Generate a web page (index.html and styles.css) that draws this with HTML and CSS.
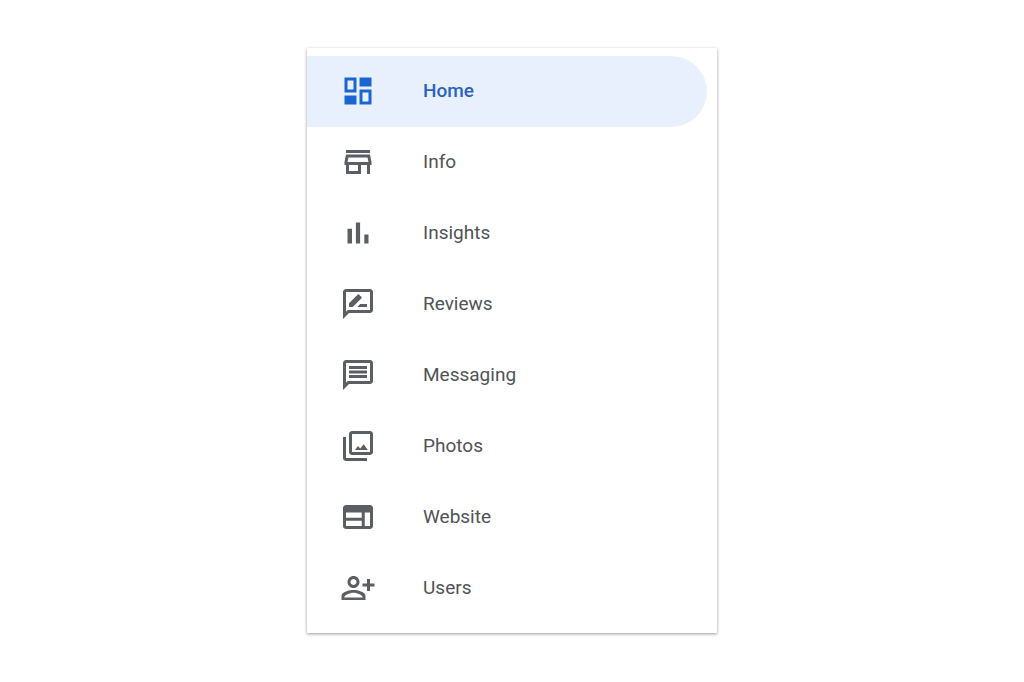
FILE: index.html
```html
<!DOCTYPE html>
<html lang="en">
<head>
  <meta charset="UTF-8">
  <title>Home</title>
  <link rel="stylesheet" href="styles.css">
</head>
<body>
  <nav class="menu">
    <a href="#" class="item active">
      <svg class="icon" viewBox="0 0 24 24"><path d="M9 5v6H5V5h4m10 8v6h-4v-6h4M21 3h-8v6h8V3zM11 3H3v10h8V3zm10 8h-8v10h8V11zm-10 4H3v6h8v-6z"/></svg>
      Home
    </a>
    <a href="#" class="item">
      <svg class="icon" viewBox="0 0 24 24"><path d="M18.36 9l.6 3H5.04l.6-3h12.72M20 4H4v2h16V4zm0 3H4l-1 5v2h1v6h10v-6h4v6h2v-6h1v-2l-1-5zM6 18v-4h6v4H6z"/></svg>
      Info
    </a>
    <a href="#" class="item">
      <svg class="icon" viewBox="0 0 24 24"><path d="M5 9.2h3V19H5zM10.6 5h2.8v14h-2.8zM16.2 13H19v6h-2.8z"/></svg>
      Insights
    </a>
    <a href="#" class="item">
      <svg class="icon" viewBox="0 0 24 24"><path d="M20 2H4c-1.1 0-2 .9-2 2v18l4-4h14c1.1 0 2-.9 2-2V4c0-1.1-.9-2-2-2zm0 14H5.17L4 17.17V4h16v12z"/><path d="M6 14h2.47l5.88-5.88c.2-.2.2-.51 0-.71l-1.77-1.77c-.2-.2-.51-.2-.71 0L6 11.53V14zm12 0v-2h-4.5l-2 2H18z"/></svg>
      Reviews
    </a>
    <a href="#" class="item">
      <svg class="icon" viewBox="0 0 24 24"><path d="M4 4h16v12H5.17L4 17.17V4m0-2c-1.1 0-1.99.9-1.99 2L2 22l4-4h14c1.1 0 2-.9 2-2V4c0-1.1-.9-2-2-2H4zm2 10h12v2H6v-2zm0-3h12v2H6V9zm0-3h12v2H6V6z"/></svg>
      Messaging
    </a>
    <a href="#" class="item">
      <svg class="icon" viewBox="0 0 24 24"><path d="M20 4v12H8V4h12m0-2H8c-1.1 0-2 .9-2 2v12c0 1.1.9 2 2 2h12c1.1 0 2-.9 2-2V4c0-1.1-.9-2-2-2zM2 6v14c0 1.1.9 2 2 2h14v-2H4V6H2z"/><path d="M10 14.6l2-2.6 1.5 1.7 2.3-2.9 2.7 3.8z"/></svg>
      Photos
    </a>
    <a href="#" class="item">
      <svg class="icon" viewBox="0 0 24 24"><path d="M20 4H4c-1.1 0-2 .9-2 2v12c0 1.1.9 2 2 2h16c1.1 0 2-.9 2-2V6c0-1.1-.9-2-2-2zM4 9h10.5v3.5H4V9zm0 5.5h10.5V18H4v-3.5zM20 18h-3.5V9H20v9z"/></svg>
      Website
    </a>
    <a href="#" class="item">
      <svg class="icon" viewBox="0 0 24 24"><path d="M13 8c0-2.21-1.79-4-4-4S5 5.79 5 8s1.79 4 4 4 4-1.79 4-4zm-2 0c0 1.1-.9 2-2 2s-2-.9-2-2 .9-2 2-2 2 .9 2 2zM1 17.3V20h16v-2.7c0-2.6-5.33-3.9-8-3.9s-8 1.3-8 3.9zm1.8 1c.2-1.4 3.5-3.1 6.2-3.1 2.69 0 6 1.7 6.2 3.1H2.8zM20 14v-3h3V9h-3V6h-2v3h-3v2h3v3h2z"/></svg>
      Users
    </a>
  </nav>
</body>
</html>
```
FILE: styles.css
```css
body {
  margin: 0;
  padding: 48px 20px;
  background-color: #fff;
  font-family: Roboto, Arial, sans-serif;
}

.menu {
  box-sizing: border-box;
  max-width: 410px;
  margin: 0 auto;
  padding: 8px 10px 9px 0;
  background-color: #fff;
  box-shadow: 0 1px 3px rgba(0, 0, 0, 0.4);
}

.item {
  display: flex;
  align-items: center;
  gap: 47px;
  padding: 16px 33px 18px;
  color: #505357;
  font-size: 19px;
  line-height: 37px;
  text-decoration: none;
}

.icon {
  width: 36px;
  height: 36px;
  fill: #5b5e63;
}

/* Current page */
.active {
  border-radius: 0 36px 36px 0;
  background-color: #e8f0fd;
  color: #2c62bd;
  font-weight: 500;
}

.active .icon {
  fill: #1b65d0;
}
```
